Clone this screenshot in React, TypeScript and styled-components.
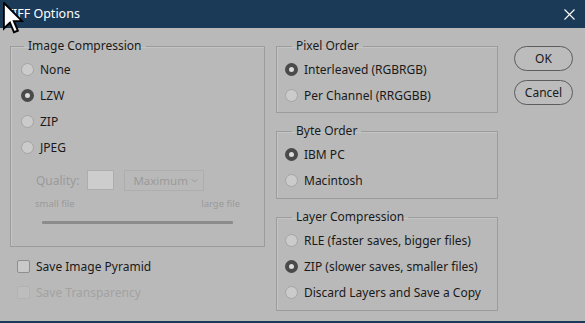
import styled, { createGlobalStyle } from 'styled-components';

const GlobalStyle = createGlobalStyle`
	html, body {
		margin: 0;
		padding: 0;
		background: #b9b9b9;
	}
	* {
		box-sizing: border-box;
	}
`;

const Window = styled.div`
	position: relative;
	width: 585px;
	height: 323px;
	background: #b9b9b9;
	border-bottom: 2px solid #1b3a57;
	display: flex;
	flex-direction: column;
	font-family: 'Noto Sans', 'Open Sans', sans-serif;
	font-size: 12px;
	color: #1a1a1a;
	overflow: hidden;
`;

const TitleBar = styled.div`
	height: 28px;
	flex: none;
	background: #1b3a57;
	color: #ffffff;
	display: flex;
	align-items: center;
	justify-content: space-between;
	padding: 0 10px 0 6px;
	font-size: 12.5px;
`;

const Title = styled.span`
	line-height: 28px;
`;

const CloseButton = styled.span`
	display: flex;
	align-items: center;
`;

const Cursor = styled.svg`
	position: absolute;
	left: 3px;
	top: 2px;
`;

const Content = styled.div`
	flex: 1;
	display: flex;
	padding: 10px 0 0 10px;
`;

const LeftColumn = styled.div`
	width: 255px;
	display: flex;
	flex-direction: column;
`;

const MiddleColumn = styled.div`
	width: 222px;
	margin-left: 11px;
	display: flex;
	flex-direction: column;
	gap: 10px;
`;

const ButtonColumn = styled.div`
	margin-left: 16px;
	padding-top: 8px;
	display: flex;
	flex-direction: column;
	gap: 9px;
`;

const Group = styled.fieldset<{ $inset: number; $bottom?: number }>`
	margin: 0;
	border: 1px solid #9c9c9c;
	box-shadow: inset 1px 1px 0 #c4c4c4;
	padding: 2px 0 ${({ $bottom }) => $bottom ?? 4}px ${({ $inset }) => $inset}px;
	min-width: 0;
`;

const Legend = styled.legend<{ $offset: number }>`
	margin-left: ${({ $offset }) => $offset}px;
	padding: 0 4px;
	line-height: 16px;
	font-size: 12px;
	color: #1a1a1a;
`;

const OptionRow = styled.label<{ $disabled?: boolean }>`
	display: flex;
	align-items: center;
	gap: 6px;
	height: 26px;
	color: ${({ $disabled }) => ($disabled ? '#a2a2a2' : '#1a1a1a')};
	white-space: nowrap;
`;

const Radio = styled.span<{ $checked?: boolean }>`
	width: 13px;
	height: 13px;
	flex: none;
	border-radius: 50%;
	background: ${({ $checked }) => ($checked ? '#dcdcdc' : '#cbcbcb')};
	border: ${({ $checked }) => ($checked ? '4px solid #4a4a4a' : '1px solid #a4a4a4')};
`;

const CheckBox = styled.span<{ $disabled?: boolean }>`
	width: 13px;
	height: 13px;
	flex: none;
	border-radius: 2px;
	background: ${({ $disabled }) => ($disabled ? '#bdbdbd' : '#c9c9c9')};
	border: 1px solid ${({ $disabled }) => ($disabled ? '#b2b2b2' : '#8e8e8e')};
`;

const CheckList = styled.div`
	margin-top: 6px;
	padding-left: 7px;
	display: flex;
	flex-direction: column;
`;

const QualityRow = styled.div`
	display: flex;
	align-items: center;
	height: 20px;
	margin: 10px 0 0 15px;
	color: #9a9a9a;
	font-size: 12px;
`;

const QualityBox = styled.span`
	width: 27px;
	height: 20px;
	margin-left: 8px;
	background: #cdcdcd;
	border: 1px solid #adadad;
`;

const Select = styled.span`
	width: 80px;
	height: 21px;
	margin-left: 10px;
	border: 1px solid #aeaeae;
	display: flex;
	align-items: center;
	justify-content: space-between;
	padding: 0 5px 0 8px;
	font-size: 11.5px;
	color: #9a9a9a;
`;

const SizeLabels = styled.div`
	display: flex;
	justify-content: space-between;
	width: 205px;
	margin: 8px 0 0 14px;
	height: 12px;
	line-height: 12px;
	font-size: 9.5px;
	color: #9a9a9a;
`;

const SliderTrack = styled.div`
	width: 191px;
	height: 3px;
	margin: 11px 0 0 21px;
	background: #8c8c8c;
	border-radius: 1px;
`;

const PillButton = styled.button`
	width: 59px;
	height: 25px;
	border-radius: 13px;
	border: 1px solid #5c5c5c;
	background: #bcbcbc;
	font-family: inherit;
	font-size: 12px;
	color: #1a1a1a;
	padding: 0;
`;

type Option = { label: string; checked?: boolean };

function RadioGroup({ title, options, inset, offset, bottom }: { title: string; options: Option[]; inset: number; offset: number; bottom?: number }) {
	return (
		<Group $inset={inset} $bottom={bottom}>
			<Legend $offset={offset}>{title}</Legend>
			{options.map((option) => (
				<OptionRow key={option.label}>
					<Radio $checked={option.checked} />
					{option.label}
				</OptionRow>
			))}
		</Group>
	);
}

export default function App() {
	return (
		<>
			<GlobalStyle />
			<Window>
				<TitleBar>
					<Title>TIFF Options</Title>
					<CloseButton>
						<svg width="11" height="11" viewBox="0 0 11 11">
							<path d="M0.5 0.5 L10.5 10.5 M10.5 0.5 L0.5 10.5" stroke="#ffffff" strokeWidth="1.1" />
						</svg>
					</CloseButton>
				</TitleBar>

				<Content>
					<LeftColumn>
						<Group $inset={10} $bottom={22}>
							<Legend $offset={3}>Image Compression</Legend>
							<OptionRow>
								<Radio />
								None
							</OptionRow>
							<OptionRow>
								<Radio $checked />
								LZW
							</OptionRow>
							<OptionRow>
								<Radio />
								ZIP
							</OptionRow>
							<OptionRow>
								<Radio />
								JPEG
							</OptionRow>
							<QualityRow>
								Quality:
								<QualityBox />
								<Select>
									Maximum
									<svg width="7" height="5" viewBox="0 0 7 5">
										<path d="M0.5 1 L3.5 4 L6.5 1" fill="none" stroke="#9a9a9a" strokeWidth="1" />
									</svg>
								</Select>
							</QualityRow>
							<SizeLabels>
								<span>small file</span>
								<span>large file</span>
							</SizeLabels>
							<SliderTrack />
						</Group>

						<CheckList>
							<OptionRow>
								<CheckBox />
								Save Image Pyramid
							</OptionRow>
							<OptionRow $disabled>
								<CheckBox $disabled />
								Save Transparency
							</OptionRow>
						</CheckList>
					</LeftColumn>

					<MiddleColumn>
						<RadioGroup
							title="Pixel Order"
							inset={8}
							offset={7}
							options={[{ label: 'Interleaved (RGBRGB)', checked: true }, { label: 'Per Channel (RRGGBB)' }]}
						/>
						<RadioGroup
							title="Byte Order"
							inset={8}
							offset={7}
							bottom={5}
							options={[{ label: 'IBM PC', checked: true }, { label: 'Macintosh' }]}
						/>
						<RadioGroup
							title="Layer Compression"
							inset={8}
							offset={7}
							bottom={5}
							options={[
								{ label: 'RLE (faster saves, bigger files)' },
								{ label: 'ZIP (slower saves, smaller files)', checked: true },
								{ label: 'Discard Layers and Save a Copy' },
							]}
						/>
					</MiddleColumn>

					<ButtonColumn>
						<PillButton type="button">OK</PillButton>
						<PillButton type="button">Cancel</PillButton>
					</ButtonColumn>
				</Content>

				<Cursor width="21" height="33" viewBox="0 0 13 20.5">
					<path
						d="M0.5 0.5 L0.5 16.5 L4.3 12.8 L6.8 18.8 L9.2 17.8 L6.7 11.9 L11.8 11.9 Z"
						fill="#ffffff"
						stroke="#000000"
						strokeWidth="1.2"
						strokeLinejoin="miter"
					/>
				</Cursor>
			</Window>
		</>
	);
}
